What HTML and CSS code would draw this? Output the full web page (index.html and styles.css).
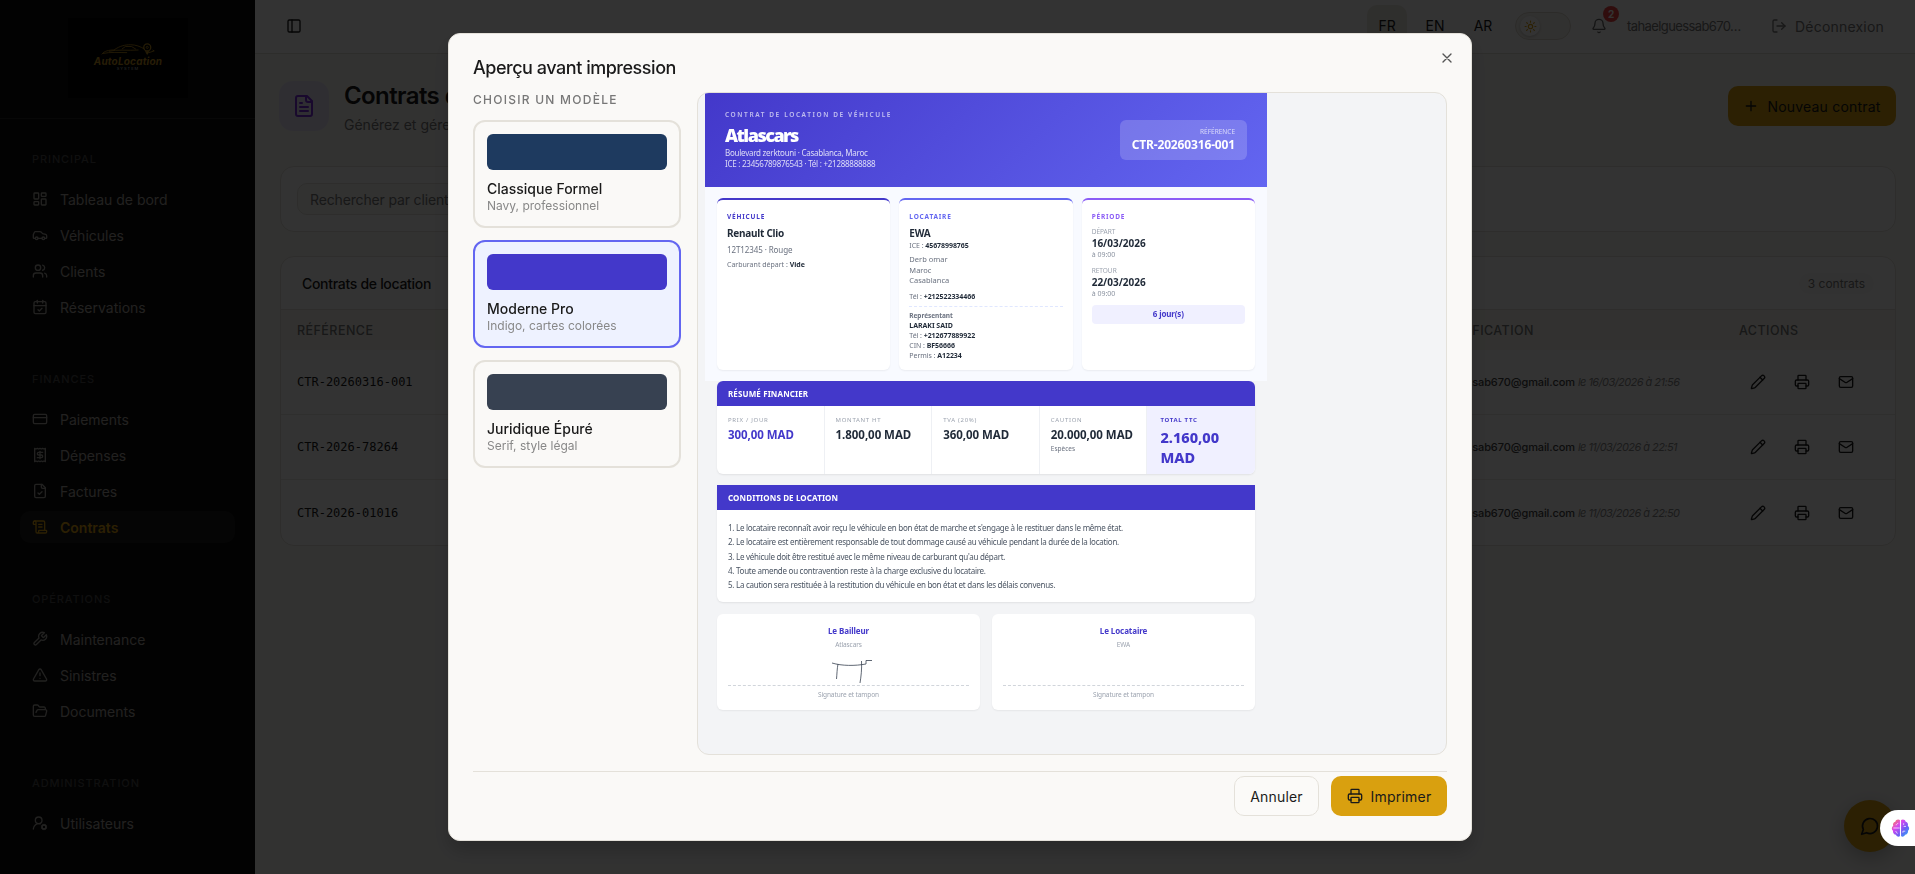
FILE: index.html
```html
<!DOCTYPE html>
<html lang="fr">
<head>
<meta charset="UTF-8">
<meta name="viewport" content="width=device-width, initial-scale=1.0">
<title>Contrats de location</title>
<link rel="stylesheet" href="styles.css">
</head>
<body>

<!-- icon sprite -->
<svg class="sprite" xmlns="http://www.w3.org/2000/svg">
  <symbol id="i-dashboard" viewBox="0 0 24 24"><rect width="7" height="9" x="3" y="3" rx="1"/><rect width="7" height="5" x="14" y="3" rx="1"/><rect width="7" height="9" x="14" y="12" rx="1"/><rect width="7" height="5" x="3" y="16" rx="1"/></symbol>
  <symbol id="i-car" viewBox="0 0 24 24"><path d="M19 17h2c.6 0 1-.4 1-1v-3c0-.9-.7-1.7-1.500-1.900L16 10s-1.300-1.400-2.200-2.300c-.5-.4-1.100-.7-1.800-.7H5c-.6 0-1.100.4-1.400.9l-1.400 2.900A3.700 3.700 0 0 0 2 12v4c0 .6.400 1 1 1h2"/><circle cx="7" cy="17" r="2"/><path d="M9 17h6"/><circle cx="17" cy="17" r="2"/></symbol>
  <symbol id="i-users" viewBox="0 0 24 24"><path d="M16 21v-2a4 4 0 0 0-4-4H6a4 4 0 0 0-4 4v2"/><circle cx="9" cy="7" r="4"/><path d="M22 21v-2a4 4 0 0 0-3-3.870"/><path d="M16 3.130a4 4 0 0 1 0 7.750"/></symbol>
  <symbol id="i-calendar" viewBox="0 0 24 24"><path d="M8 2v4"/><path d="M16 2v4"/><rect width="18" height="18" x="3" y="4" rx="2"/><path d="M3 10h18"/><path d="m9 16 2 2 4-4"/></symbol>
  <symbol id="i-card" viewBox="0 0 24 24"><rect width="20" height="14" x="2" y="5" rx="2"/><path d="M2 10h20"/></symbol>
  <symbol id="i-receipt" viewBox="0 0 24 24"><path d="M4 2v20l2-1 2 1 2-1 2 1 2-1 2 1 2-1 2 1V2l-2 1-2-1-2 1-2-1-2 1-2-1-2 1Z"/><path d="M16 8h-6a2 2 0 1 0 0 4h4a2 2 0 1 1 0 4H8"/><path d="M12 17.500v-11"/></symbol>
  <symbol id="i-filecheck" viewBox="0 0 24 24"><path d="M15 2H6a2 2 0 0 0-2 2v16a2 2 0 0 0 2 2h12a2 2 0 0 0 2-2V7Z"/><path d="M14 2v4a2 2 0 0 0 2 2h4"/><path d="m9 15 2 2 4-4"/></symbol>
  <symbol id="i-scroll" viewBox="0 0 24 24"><path d="M15 12h-5"/><path d="M15 8h-5"/><path d="M19 17V5a2 2 0 0 0-2-2H4"/><path d="M8 21h12a2 2 0 0 0 2-2v-1a1 1 0 0 0-1-1H11a1 1 0 0 0-1 1v1a2 2 0 1 1-4 0V5a2 2 0 1 0-4 0v2a1 1 0 0 0 1 1h3"/></symbol>
  <symbol id="i-wrench" viewBox="0 0 24 24"><path d="M14.700 6.300a1 1 0 0 0 0 1.400l1.600 1.600a1 1 0 0 0 1.400 0l3.770-3.770a6 6 0 0 1-7.940 7.940l-6.910 6.910a2.120 2.120 0 0 1-3-3l6.910-6.910a6 6 0 0 1 7.940-7.940l-3.760 3.760z"/></symbol>
  <symbol id="i-alert" viewBox="0 0 24 24"><path d="m21.730 18-8-14a2 2 0 0 0-3.480 0l-8 14A2 2 0 0 0 4 21h16a2 2 0 0 0 1.730-3"/><path d="M12 9v4"/><path d="M12 17h.01"/></symbol>
  <symbol id="i-folder" viewBox="0 0 24 24"><path d="m6 14 1.500-2.900A2 2 0 0 1 9.240 10H20a2 2 0 0 1 1.940 2.500l-1.540 6a2 2 0 0 1-1.950 1.500H4a2 2 0 0 1-2-2V5a2 2 0 0 1 2-2h3.900a2 2 0 0 1 1.690.9l.81 1.200a2 2 0 0 0 1.670.9H18a2 2 0 0 1 2 2v2"/></symbol>
  <symbol id="i-usercog" viewBox="0 0 24 24"><path d="M2 21a8 8 0 0 1 10.430-7.620"/><circle cx="10" cy="8" r="5"/><circle cx="18" cy="18" r="3"/><path d="m19.500 14.300-.4.900M16.900 20.800l-.4.900M21.700 19.500l-.9-.4M15.200 16.900l-.9-.4M21.700 16.500l-.9.400M15.200 19.100l-.9.400M19.500 21.700l-.4-.9M16.900 15.200l-.4-.9"/></symbol>
  <symbol id="i-panel" viewBox="0 0 24 24"><rect width="18" height="18" x="3" y="3" rx="2"/><path d="M9 3v18"/></symbol>
  <symbol id="i-file" viewBox="0 0 24 24"><path d="M15 2H6a2 2 0 0 0-2 2v16a2 2 0 0 0 2 2h12a2 2 0 0 0 2-2V7Z"/><path d="M14 2v4a2 2 0 0 0 2 2h4"/><path d="M10 9H8"/><path d="M16 13H8"/><path d="M16 17H8"/></symbol>
  <symbol id="i-sun" viewBox="0 0 24 24"><circle cx="12" cy="12" r="4"/><path d="M12 2v2M12 20v2M4.930 4.930l1.410 1.410M17.660 17.660l1.410 1.410M2 12h2M20 12h2M6.340 17.660l-1.410 1.410M19.070 4.930l-1.410 1.410"/></symbol>
  <symbol id="i-bell" viewBox="0 0 24 24"><path d="M10.270 21a2 2 0 0 0 3.460 0"/><path d="M3.260 15.330A1 1 0 0 0 4 17h16a1 1 0 0 0 .74-1.670C19.410 13.960 18 12.500 18 8A6 6 0 0 0 6 8c0 4.500-1.410 5.960-2.740 7.330"/></symbol>
  <symbol id="i-logout" viewBox="0 0 24 24"><path d="M9 21H5a2 2 0 0 1-2-2V5a2 2 0 0 1 2-2h4"/><path d="m16 17 5-5-5-5"/><path d="M21 12H9"/></symbol>
  <symbol id="i-plus" viewBox="0 0 24 24"><path d="M5 12h14M12 5v14"/></symbol>
  <symbol id="i-pencil" viewBox="0 0 24 24"><path d="M21.170 6.810a1 1 0 0 0-3.980-3.980L3.840 16.170a2 2 0 0 0-.5.830l-1.320 4.350a.5.500 0 0 0 .62.620l4.350-1.320a2 2 0 0 0 .83-.5z"/><path d="m15 5 4 4"/></symbol>
  <symbol id="i-printer" viewBox="0 0 24 24"><path d="M6 18H4a2 2 0 0 1-2-2v-5a2 2 0 0 1 2-2h16a2 2 0 0 1 2 2v5a2 2 0 0 1-2 2h-2"/><path d="M6 9V3a1 1 0 0 1 1-1h10a1 1 0 0 1 1 1v6"/><rect x="6" y="14" width="12" height="8" rx="1"/></symbol>
  <symbol id="i-mail" viewBox="0 0 24 24"><rect width="20" height="16" x="2" y="4" rx="2"/><path d="m22 7-8.970 5.700a1.940 1.940 0 0 1-2.060 0L2 7"/></symbol>
  <symbol id="i-x" viewBox="0 0 24 24"><path d="M18 6 6 18M6 6l12 12"/></symbol>
  <symbol id="i-chat" viewBox="0 0 24 24"><path d="M7.900 20A9 9 0 1 0 4 16.100L2 22Z"/></symbol>
</svg>

<div class="app">
  <aside class="sidebar">
    <div class="brand">
      <div class="logo">
        <svg class="logo-car" viewBox="0 0 68 16" fill="none" stroke="#b98a1d">
          <path d="M4 13C7 9 12 8 18 8C25 3 31 2 37 2C43 2 48 4 53 7M12 9.500C22 7 34 9 46 8M5 12C14 10 24 11 33 11M27 7L31 4L38 4L43 7M62 8L64 9L58 11" stroke-width="1"/>
          <circle cx="56" cy="5" r="4" stroke-width="1.500"/><circle cx="56" cy="5" r="1.200"/><path d="M54 9.500L56 13L58 9.500" fill="#b98a1d"/>
        </svg>
        <div class="logo-name">AutoLocation</div>
        <div class="logo-sub">SYSTEM</div>
      </div>
    </div>
    <nav class="nav">
      <section class="nav-group">
        <h4>PRINCIPAL</h4>
        <a><svg class="icon"><use href="#i-dashboard"/></svg>Tableau de bord</a>
        <a><svg class="icon"><use href="#i-car"/></svg>Véhicules</a>
        <a><svg class="icon"><use href="#i-users"/></svg>Clients</a>
        <a><svg class="icon"><use href="#i-calendar"/></svg>Réservations</a>
      </section>
      <section class="nav-group">
        <h4>FINANCES</h4>
        <a><svg class="icon"><use href="#i-card"/></svg>Paiements</a>
        <a><svg class="icon"><use href="#i-receipt"/></svg>Dépenses</a>
        <a><svg class="icon"><use href="#i-filecheck"/></svg>Factures</a>
        <a class="active"><svg class="icon"><use href="#i-scroll"/></svg>Contrats</a>
      </section>
      <section class="nav-group">
        <h4>OPÉRATIONS</h4>
        <a><svg class="icon"><use href="#i-wrench"/></svg>Maintenance</a>
        <a><svg class="icon"><use href="#i-alert"/></svg>Sinistres</a>
        <a><svg class="icon"><use href="#i-folder"/></svg>Documents</a>
      </section>
      <section class="nav-group">
        <h4>ADMINISTRATION</h4>
        <a><svg class="icon"><use href="#i-usercog"/></svg>Utilisateurs</a>
      </section>
    </nav>
  </aside>

  <main class="main">
    <header class="topbar">
      <svg class="icon"><use href="#i-panel"/></svg>
      <div class="topbar-right">
        <div class="langs"><span class="on">FR</span><span>EN</span><span>AR</span></div>
        <div class="theme"><span class="thumb"><svg class="icon"><use href="#i-sun"/></svg></span></div>
        <div class="bell"><svg class="icon"><use href="#i-bell"/></svg><span class="count">2</span></div>
        <span class="email">tahaelguessab670…</span>
        <a class="logout"><svg class="icon"><use href="#i-logout"/></svg>Déconnexion</a>
      </div>
    </header>

    <div class="content">
      <div class="page-head">
        <div class="page-icon"><svg class="icon"><use href="#i-file"/></svg></div>
        <div class="page-title">
          <h1>Contrats de location</h1>
          <p>Générez et gérez vos contrats</p>
        </div>
        <button class="btn btn-gold btn-new"><svg class="icon"><use href="#i-plus"/></svg>Nouveau contrat</button>
      </div>

      <div class="card search"><div class="field">Rechercher par client</div></div>

      <div class="card table">
        <div class="table-head"><h3>Contrats de location</h3><span class="pill">3 contrats</span></div>
        <div class="tr th"><span>RÉFÉRENCE</span><span class="th-mod">MODIFICATION</span><span>ACTIONS</span></div>
        <div class="tr">
          <span class="ref">CTR-20260316-001</span>
          <span class="mod"><b>tahaelguessab670@gmail.com</b> <i>le 16/03/2026 à 21:56</i></span>
          <span class="acts"><svg class="icon"><use href="#i-pencil"/></svg><svg class="icon"><use href="#i-printer"/></svg><svg class="icon"><use href="#i-mail"/></svg></span>
        </div>
        <div class="tr">
          <span class="ref">CTR-2026-78264</span>
          <span class="mod"><b>tahaelguessab670@gmail.com</b> <i>le 11/03/2026 à 22:51</i></span>
          <span class="acts"><svg class="icon"><use href="#i-pencil"/></svg><svg class="icon"><use href="#i-printer"/></svg><svg class="icon"><use href="#i-mail"/></svg></span>
        </div>
        <div class="tr">
          <span class="ref">CTR-2026-01016</span>
          <span class="mod"><b>tahaelguessab670@gmail.com</b> <i>le 11/03/2026 à 22:50</i></span>
          <span class="acts"><svg class="icon"><use href="#i-pencil"/></svg><svg class="icon"><use href="#i-printer"/></svg><svg class="icon"><use href="#i-mail"/></svg></span>
        </div>
      </div>
    </div>
  </main>
</div>

<div class="chat"><svg class="icon"><use href="#i-chat"/></svg></div>

<div class="overlay">
  <div class="modal">
    <svg class="icon close"><use href="#i-x"/></svg>
    <h2>Aperçu avant impression</h2>
    <div class="modal-body">
      <div class="models">
        <h5>CHOISIR UN MODÈLE</h5>
        <div class="model">
          <div class="swatch navy"></div>
          <strong>Classique Formel</strong>
          <small>Navy, professionnel</small>
        </div>
        <div class="model selected">
          <div class="swatch indigo"></div>
          <strong>Moderne Pro</strong>
          <small>Indigo, cartes colorées</small>
        </div>
        <div class="model">
          <div class="swatch slate"></div>
          <strong>Juridique Épuré</strong>
          <small>Serif, style légal</small>
        </div>
      </div>

      <div class="preview">
        <div class="doc">
          <div class="doc-top">
            <div class="doc-header">
              <div class="doc-id">
                <div class="doc-eyebrow">CONTRAT DE LOCATION DE VÉHICULE</div>
                <div class="doc-company">Atlascars</div>
                <div class="doc-address">Boulevard zerktouni · Casablanca, Maroc<br>ICE : 23456789876543 · Tél : +21288888888</div>
              </div>
              <div class="doc-ref"><span>RÉFÉRENCE</span><b>CTR-20260316-001</b></div>
            </div>
            <div class="doc-cards">
              <div class="dcard c1">
                <h6>VÉHICULE</h6>
                <div class="name">Renault Clio</div>
                <div class="plate">12T12345 · Rouge</div>
                <div class="fuel">Carburant départ : <b>Vide</b></div>
              </div>
              <div class="dcard c2">
                <h6>LOCATAIRE</h6>
                <div class="name">EWA</div>
                <div class="line">ICE : <b>45678998765</b></div>
                <div class="addr">Derb omar<br>Maroc<br>Casablanca</div>
                <div class="line">Tél : <b>+212522334466</b></div>
                <div class="rep">
                  <div class="line rep-title">Représentant</div>
                  <div class="line"><b>LARAKI SAID</b></div>
                  <div class="line">Tél : <b>+212677889922</b></div>
                  <div class="line">CIN : <b>BF56666</b></div>
                  <div class="line">Permis : <b>A12234</b></div>
                </div>
              </div>
              <div class="dcard c3">
                <h6>PÉRIODE</h6>
                <div class="when"><span>DÉPART</span><b>16/03/2026</b><em>à 09:00</em></div>
                <div class="when"><span>RETOUR</span><b>22/03/2026</b><em>à 09:00</em></div>
                <div class="days">6 jour(s)</div>
              </div>
            </div>
          </div>

          <div class="block finance">
            <div class="block-title">RÉSUMÉ FINANCIER</div>
            <div class="fin-row">
              <div class="fin first"><span>PRIX / JOUR</span><b>300,00 MAD</b></div>
              <div class="fin"><span>MONTANT HT</span><b>1.800,00 MAD</b></div>
              <div class="fin"><span>TVA (20%)</span><b>360,00 MAD</b></div>
              <div class="fin"><span>CAUTION</span><b>20.000,00 MAD</b><em>Espèces</em></div>
              <div class="fin total"><span>TOTAL TTC</span><b>2.160,00 MAD</b></div>
            </div>
          </div>

          <div class="block conditions">
            <div class="block-title">CONDITIONS DE LOCATION</div>
            <div class="rules">
              <p>1. Le locataire reconnaît avoir reçu le véhicule en bon état de marche et s'engage à le restituer dans le même état.</p>
              <p>2. Le locataire est entièrement responsable de tout dommage causé au véhicule pendant la durée de la location.</p>
              <p>3. Le véhicule doit être restitué avec le même niveau de carburant qu'au départ.</p>
              <p>4. Toute amende ou contravention reste à la charge exclusive du locataire.</p>
              <p>5. La caution sera restituée à la restitution du véhicule en bon état et dans les délais convenus.</p>
            </div>
          </div>

          <div class="signs">
            <div class="sign">
              <b>Le Bailleur</b>
              <span>Atlascars</span>
              <div class="sign-area">
                <svg width="42" height="26" viewBox="0 0 42 26" fill="none" stroke="#374151" stroke-width="0.800"><path d="M1 4C11 7 24 7 35 5V1.500L41 1.500M7 5C6 10 6 15 5.500 20M30.500 2C31 10 30 18 29 24"/></svg>
              </div>
              <span class="caption">Signature et tampon</span>
            </div>
            <div class="sign">
              <b>Le Locataire</b>
              <span>EWA</span>
              <div class="sign-area"></div>
              <span class="caption">Signature et tampon</span>
            </div>
          </div>
        </div>
      </div>
    </div>
    <div class="modal-foot">
      <button class="btn btn-line">Annuler</button>
      <button class="btn btn-gold btn-print"><svg class="icon"><use href="#i-printer"/></svg>Imprimer</button>
    </div>
  </div>
</div>

<div class="brain">
  <svg width="19" height="20" viewBox="0 0 24 24">
    <defs><linearGradient id="bg" x1="0" y1="0" x2="1" y2="1"><stop offset="0" stop-color="#ff8a3d"/><stop offset=".35" stop-color="#d946ef"/><stop offset=".65" stop-color="#6d5cf5"/><stop offset="1" stop-color="#22b8f5"/></linearGradient></defs>
    <path fill="url(#bg)" d="M11.300 2C9 .2 6 1.500 5.500 4 3 4.500 2 7 2.800 9 .5 10.500.500 14 2.500 15.500 2 18.500 4 20.500 6.300 20.500 7.500 23.500 10.500 23.300 11.300 22zM12.700 2C15 .2 18 1.500 18.500 4c2.500.500 3.500 3 2.700 5 2.300 1.500 2.300 5 .3 6.500.500 3-1.500 5-3.800 5-1.200 3-4.200 2.800-5 1.500z"/>
    <path fill="none" stroke="#fff" stroke-width="0.900" d="M3 12h8M6 8c2 0 2-2 3-2M6 16c0 2 2 1 2 3M16 8V6M19 10h-3M18 16h-3v2"/>
  </svg>
</div>

</body>
</html>
```
FILE: styles.css
```css
* {
  box-sizing: border-box;
}
body {
  margin: 0;
  height: 874px;
  overflow: hidden;
  font-family: Inter, "Noto Sans", sans-serif;
  font-size: 14px;
  color: #1a1a1a;
  background-color: #faf9f6;
}
h1, h2, h3, h4, h5, h6, p {
  margin: 0;
}
.sprite {
  display: none;
}
.icon {
  width: 16px;
  height: 16px;
  flex: none;
  fill: none;
  stroke: currentColor;
  stroke-width: 2;
  stroke-linecap: round;
  stroke-linejoin: round;
}
.app {
  display: flex;
  height: 874px;
}

/* Sidebar */
.sidebar {
  width: 255px;
  flex: none;
  background-color: #0c0c0c;
}
.brand {
  height: 119px;
  padding-top: 18px;
  border-bottom: 1px solid #232323;
}
.logo {
  width: 120px;
  height: 80px;
  margin-left: 68px;
  padding-top: 25px;
  display: flex;
  flex-direction: column;
  align-items: center;
  background-color: #000;
}
.logo-car {
  width: 68px;
  height: 14px;
}
.logo-name {
  font-size: 10px;
  line-height: 9px;
  font-weight: 700;
  font-style: italic;
  letter-spacing: 0.2px;
  color: #c08f20;
}
.logo-sub {
  font-size: 4px;
  line-height: 5px;
  letter-spacing: 1px;
  color: #ccc;
}
.nav {
  padding: 25px 20px 0;
}
.nav-group {
  display: flex;
  flex-direction: column;
  gap: 4px;
  margin-bottom: 41px;
}
.nav-group h4 {
  height: 31px;
  margin-bottom: 4px;
  padding-left: 12px;
  font-size: 11px;
  line-height: 31px;
  font-weight: 500;
  letter-spacing: 0.9px;
  color: #4c4c4c;
}
.nav-group a {
  display: flex;
  align-items: center;
  gap: 12px;
  height: 32px;
  padding-left: 12px;
  border-radius: 10px;
  font-size: 14px;
  color: #a8a6a0;
}
.nav-group a.active {
  background-color: #1b1b1b;
  color: #d99e10;
  font-weight: 600;
}

/* Top bar */
.main {
  flex: 1;
  min-width: 0;
}
.topbar {
  display: flex;
  align-items: center;
  justify-content: space-between;
  height: 54px;
  padding: 0 31px 1px;
  background-color: #fff;
  border-bottom: 1px solid #e2dfd8;
}
.topbar-right {
  display: flex;
  align-items: center;
}
.langs {
  display: flex;
  gap: 8px;
}
.langs span {
  width: 40px;
  height: 42px;
  border-radius: 10px;
  line-height: 42px;
  text-align: center;
}
.langs .on {
  background-color: #ebe8df;
}
.theme {
  width: 56px;
  height: 28px;
  margin-left: 12px;
  padding: 3px 4px;
  border: 1px solid #dcd8cd;
  border-radius: 14px;
  background-color: #f5f3ee;
}
.thumb {
  display: flex;
  align-items: center;
  justify-content: center;
  width: 20px;
  height: 20px;
  border-radius: 50%;
  background-color: #fff;
  box-shadow: 0 1px 3px rgba(0, 0, 0, 0.2);
  color: #d99e10;
}
.thumb .icon {
  width: 13px;
  height: 13px;
}
.bell {
  position: relative;
  display: flex;
  margin-left: 20px;
  color: #666;
}
.count {
  position: absolute;
  left: 12px;
  top: -12px;
  width: 16px;
  height: 16px;
  border-radius: 50%;
  background-color: #ef4444;
  color: #fff;
  font-size: 10px;
  font-weight: 700;
  line-height: 16px;
  text-align: center;
}
.email {
  width: 114px;
  margin-left: 20px;
  font-size: 13px;
  letter-spacing: -0.6px;
  white-space: nowrap;
  color: #777;
}
.logout {
  display: flex;
  align-items: center;
  gap: 8px;
  margin-left: 30px;
  letter-spacing: 0.2px;
  color: #777;
}

/* Page */
.content {
  padding: 27px 19px 0 25px;
}
.page-head {
  display: flex;
  height: 50px;
}
.page-icon {
  display: flex;
  align-items: center;
  justify-content: center;
  width: 50px;
  height: 50px;
  margin-left: -1px;
  border-radius: 14px;
  background-color: #ebe7fb;
  color: #7c2fe0;
}
.page-icon .icon {
  width: 24px;
  height: 24px;
}
.page-title {
  flex: 1;
  padding-left: 15px;
}
.page-title h1 {
  font-size: 24px;
  line-height: 30px;
  font-weight: 600;
  letter-spacing: -0.6px;
}
.page-title p {
  margin-top: 5px;
  line-height: 18px;
  color: #777;
}
.btn {
  display: flex;
  align-items: center;
  justify-content: center;
  gap: 8px;
  height: 40px;
  padding: 0;
  border: none;
  border-radius: 10px;
  font-family: inherit;
  font-size: 14px;
  letter-spacing: 0.2px;
  font-weight: 400;
  color: #1a1a1a;
}
.btn-gold {
  background-color: #d9a00f;
}
.btn-new {
  width: 168px;
  margin-top: 5px;
}
.card {
  border: 1px solid #e4e1da;
  border-radius: 14px;
  background-color: #fff;
  overflow: hidden;
}
.search {
  height: 66px;
  margin-top: 35px;
  padding: 16px;
}
.field {
  width: 400px;
  height: 32px;
  padding-left: 12px;
  border: 1px solid #e4e1da;
  border-radius: 10px;
  line-height: 32px;
  letter-spacing: -0.15px;
  background-color: #faf9f6;
  color: #777;
}
.table {
  margin-top: 24px;
}
.table-head {
  display: flex;
  align-items: center;
  justify-content: space-between;
  height: 53px;
  padding: 0 21px;
  border-bottom: 1px solid #e4e1da;
}
.table-head h3 {
  font-size: 14px;
  font-weight: 500;
  letter-spacing: -0.3px;
}
.pill {
  padding: 3px 9px;
  border-radius: 12px;
  font-size: 12px;
  background-color: #fbfaf8;
  color: #777;
}
.tr {
  display: grid;
  grid-template-columns: 1125px 317px 1fr;
  align-items: center;
  height: 65px;
  padding-left: 16px;
  border-bottom: 1px solid #ece9e3;
}
.tr:last-child {
  border-bottom: none;
}
.th {
  height: 40px;
  border-bottom: none;
  background-color: #f8f6f0;
  color: #777;
  font-size: 12.5px;
  font-weight: 500;
  letter-spacing: 0.45px;
}
.th-mod {
  text-align: right;
  padding-right: 205px;
}
.ref {
  font-family: "DejaVu Sans Mono", monospace;
  font-size: 12px;
}
.mod {
  display: flex;
  gap: 3px;
  margin-left: -5px;
  font-size: 11px;
  white-space: nowrap;
  color: #888;
}
.mod b {
  display: flex;
  justify-content: flex-end;
  width: 158px;
  letter-spacing: -0.1px;
  color: #444;
  font-weight: 500;
}
.mod i {
  letter-spacing: -0.55px;
}
.acts {
  display: flex;
  gap: 28px;
  padding-left: 11px;
}

.chat {
  position: fixed;
  right: 19px;
  bottom: 22px;
  display: flex;
  align-items: center;
  justify-content: center;
  width: 52px;
  height: 52px;
  border-radius: 50%;
  background-color: #d9a00f;
  box-shadow: 0 6px 20px rgba(0, 0, 0, 0.25);
}
.chat .icon {
  width: 20px;
  height: 20px;
}
.brain {
  position: fixed;
  right: 0;
  bottom: 28px;
  display: flex;
  align-items: center;
  width: 35px;
  height: 36px;
  padding-left: 11px;
  border-radius: 18px 0 0 18px;
  background-color: #fff;
}

/* Modal */
.overlay {
  position: fixed;
  inset: 0;
  display: flex;
  align-items: center;
  justify-content: center;
  padding-left: 5px;
  background-color: rgba(0, 0, 0, 0.8);
}
.modal {
  position: relative;
  display: flex;
  flex-direction: column;
  width: 1024px;
  height: 808px;
  padding: 24px;
  border: 1px solid #e4e1da;
  border-radius: 12px;
  background-color: #faf9f7;
  box-shadow: 0 10px 20px rgba(0, 0, 0, 0.2);
}
.close {
  position: absolute;
  right: 16px;
  top: 16px;
  color: #555;
}
.modal h2 {
  height: 34px;
  font-size: 18px;
  line-height: 20px;
  font-weight: 500;
  letter-spacing: -0.47px;
}
.modal-body {
  display: flex;
  gap: 16px;
  height: 663px;
}
.models {
  display: flex;
  flex-direction: column;
  gap: 12px;
  width: 208px;
}
.models h5 {
  height: 16px;
  font-size: 12px;
  line-height: 15px;
  font-weight: 500;
  letter-spacing: 1.25px;
  color: #777;
}
.model {
  display: flex;
  flex-direction: column;
  height: 108px;
  padding: 12px;
  border: 2px solid #e4e1da;
  border-radius: 12px;
}
.model.selected {
  border-color: #6366f1;
  background-color: #eef2ff;
}
.swatch {
  height: 36px;
  border-radius: 6px;
}
.navy {
  background-color: #1e3a5f;
}
.indigo {
  background-color: #4338ca;
}
.slate {
  background-color: #374151;
}
.model strong {
  margin-top: 9px;
  font-size: 14px;
  line-height: 20px;
  font-weight: 500;
}
.model small {
  font-size: 12px;
  line-height: 14px;
  color: #888;
}
.preview {
  flex: 1;
  padding-left: 7px;
  border: 1px solid #e4e1da;
  border-radius: 12px;
  background-color: #f3f4f6;
  overflow: hidden;
}
.modal-foot {
  display: flex;
  justify-content: flex-end;
  gap: 12px;
  margin-top: 16px;
  padding-top: 4px;
  border-top: 1px solid #e4e1da;
}
.btn-line {
  width: 85px;
  border: 1px solid #e4e1da;
  background-color: #fbfaf8;
}
.btn-print {
  width: 116px;
}

/* Contract document */
.doc {
  width: 562px;
  font-family: "Noto Sans", sans-serif;
  font-size: 7.5px;
  color: #6b7280;
}
.doc b {
  color: #1f2937;
}
.doc-top {
  height: 288px;
  background-color: #f8faff;
}
.doc-header {
  display: flex;
  align-items: center;
  justify-content: space-between;
  height: 94px;
  padding: 0 20px;
  background: linear-gradient(135deg, #4338ca, #6366f1);
  color: #fff;
}
.doc-id {
  margin-top: -1px;
}
.doc-eyebrow {
  font-size: 6.5px;
  line-height: 10px;
  letter-spacing: 1.6px;
  font-weight: 600;
  opacity: 0.65;
}
.doc-company {
  margin: 4px 0 1px;
  font-size: 18px;
  line-height: 22px;
  font-weight: 900;
  letter-spacing: -1.5px;
}
.doc-address {
  font-size: 8px;
  line-height: 11px;
  opacity: 0.8;
  letter-spacing: -0.25px;
}
.doc-ref {
  display: flex;
  flex-direction: column;
  justify-content: center;
  width: 127px;
  height: 40px;
  padding-right: 12px;
  border-radius: 6px;
  background-color: rgba(255, 255, 255, 0.18);
  text-align: right;
}
.doc-ref span {
  font-size: 6.5px;
  line-height: 10px;
  opacity: 0.7;
}
.doc-ref b {
  font-size: 12px;
  line-height: 16px;
  letter-spacing: -0.15px;
  color: #fff;
}
.doc-cards {
  display: grid;
  grid-template-columns: repeat(3, 1fr);
  gap: 9px;
  padding: 11px 12px;
}
.dcard {
  height: 172px;
  padding: 12px 10px 0;
  border-top: 2px solid #4338ca;
  border-radius: 6px;
  background-color: #fff;
  box-shadow: 0 1px 2px rgba(0, 0, 0, 0.06);
}
.dcard h6 {
  height: 14px;
  font-size: 6.5px;
  line-height: 9px;
  letter-spacing: 0.8px;
  color: #4338ca;
}
.c2 {
  border-top-color: #6366f1;
}
.c2 h6 {
  color: #6366f1;
}
.c3 {
  border-top-color: #8b5cf6;
}
.c3 h6 {
  color: #8b5cf6;
}
.name {
  font-size: 10px;
  line-height: 15px;
  font-weight: 700;
  letter-spacing: -0.25px;
  color: #1f2937;
}
.plate {
  margin-top: 3px;
  line-height: 12px;
  font-size: 8px;
  letter-spacing: -0.1px;
}
.fuel {
  margin-top: 4px;
  line-height: 10px;
  font-size: 7px;
}
.line {
  font-size: 7px;
  line-height: 10px;
  letter-spacing: -0.05px;
}
.addr {
  margin: 3px 0 6px;
  font-size: 7.5px;
  line-height: 10.5px;
}
.rep {
  margin-top: 4px;
  padding-top: 4px;
  border-top: 1px dashed #e0e7ff;
}
.rep-title {
  font-weight: 700;
  font-size: 6.5px;
}
.when {
  display: flex;
  flex-direction: column;
  height: 39px;
}
.when span {
  margin-top: 1px;
  font-size: 6.5px;
  line-height: 10px;
  color: #9ca3af;
}
.when b {
  font-size: 10px;
  line-height: 12px;
  font-weight: 700;
}
.when em {
  font-style: normal;
  font-size: 7px;
  line-height: 12px;
  color: #8b93a0;
}
.days {
  height: 19px;
  margin-top: 1px;
  border-radius: 4px;
  background-color: #f0f0ff;
  color: #4338ca;
  font-size: 8px;
  line-height: 18px;
  font-weight: 700;
  letter-spacing: -0.15px;
  text-align: center;
}
.block {
  margin: 0 12px 11px;
  border-radius: 6px;
  background-color: #fff;
  box-shadow: 0 1px 2px rgba(0, 0, 0, 0.08);
}
.block-title {
  height: 25px;
  padding-left: 11px;
  background-color: #4338ca;
  color: #fff;
  font-size: 8px;
  line-height: 26px;
  font-weight: 700;
  letter-spacing: 0.12px;
}
.finance {
  height: 93px;
  overflow: hidden;
}
.fin-row {
  display: grid;
  grid-template-columns: repeat(5, 1fr);
  height: 68px;
}
.fin {
  display: flex;
  flex-direction: column;
  padding: 9px 11px 0;
  border-right: 1px solid #eef0f4;
  white-space: nowrap;
}
.fin span {
  font-size: 6px;
  line-height: 10px;
  letter-spacing: 0.7px;
  color: #9ca3af;
}
.fin b {
  margin-top: 2px;
  font-size: 11.5px;
  line-height: 16px;
  font-weight: 700;
  letter-spacing: -0.05px;
}
.fin em {
  margin-top: 1px;
  font-style: normal;
  font-size: 6.5px;
  line-height: 9px;
}
.fin.first b {
  color: #4338ca;
}
.fin.total {
  padding-left: 13px;
  border: none;
  background-color: #f0f0ff;
  white-space: normal;
}
.fin.total span {
  color: #4338ca;
  font-weight: 700;
}
.fin.total b {
  font-size: 14.5px;
  line-height: 20px;
  font-weight: 800;
  letter-spacing: 0;
  color: #4338ca;
}
.conditions {
  height: 117px;
}
.rules {
  padding: 11px 11px 0;
}
.rules p {
  height: 14.25px;
  font-size: 8px;
  line-height: 14px;
  letter-spacing: -0.27px;
  white-space: nowrap;
  color: #4b5563;
}
.signs {
  display: grid;
  grid-template-columns: 1fr 1fr;
  gap: 12px;
  padding: 1px 12px 0;
}
.sign {
  display: flex;
  flex-direction: column;
  height: 96px;
  padding: 11px 11px 0;
  border-radius: 6px;
  background-color: #fff;
  box-shadow: 0 1px 2px rgba(0, 0, 0, 0.06);
  text-align: center;
}
.sign b {
  font-size: 8px;
  line-height: 12px;
  font-weight: 700;
  letter-spacing: -0.1px;
  color: #4338ca;
}
.sign span {
  margin-top: 3px;
  font-size: 6.5px;
  line-height: 10px;
  letter-spacing: -0.1px;
  color: #9ca3af;
}
.sign-area {
  height: 36px;
  padding-top: 9px;
  padding-left: 6px;
  border-bottom: 1px dashed #d1d5db;
}
.sign .caption {
  margin-top: 4px;
}
```
